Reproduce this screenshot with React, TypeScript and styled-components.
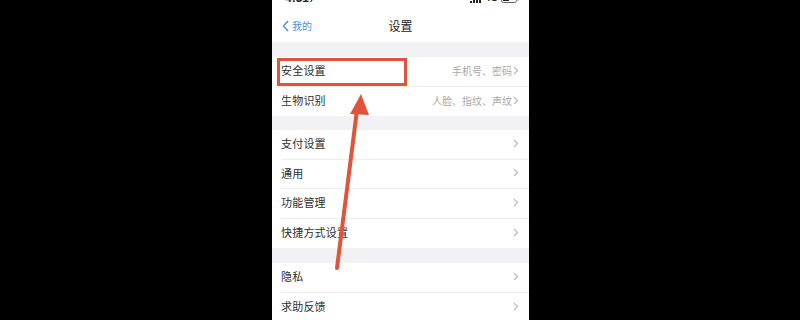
import React from "react";
import styled, { createGlobalStyle } from "styled-components";

const Global = createGlobalStyle`
  html, body { margin: 0; padding: 0; background: #000; }
  body { width: 800px; height: 320px; overflow: hidden; font-family: "Noto Sans CJK SC", "Noto Sans", sans-serif; }
`;

const Stage = styled.div`
  width: 800px;
  height: 320px;
  background: #000;
  display: flex;
  justify-content: flex-start;
  padding-left: 272px;
  box-sizing: border-box;
`;

const Phone = styled.div`
  position: relative;
  width: 257px;
  height: 320px;
  background: #fff;
  overflow: hidden;
  display: flex;
  flex-direction: column;
`;

const StatusBar = styled.div`
  height: 12px;
  flex: none;
  display: flex;
  align-items: flex-end;
  justify-content: space-between;
  padding: 0 10px 0 13px;
  overflow: hidden;
`;

const StatusTime = styled.span`
  font-family: "Liberation Sans", sans-serif;
  font-weight: 700;
  font-size: 12px;
  line-height: 12px;
  color: #222;
  margin-bottom: 8px;
`;

const StatusRight = styled.div`
  display: flex;
  align-items: flex-end;
  gap: 3px;
  margin-bottom: 9px;
  color: #222;
  font-family: "Liberation Sans", sans-serif;
  font-weight: 700;
  font-size: 10px;
  line-height: 10px;
`;

const NavBar = styled.div`
  height: 30px;
  box-sizing: border-box;
  padding: 0 10px 3px;
  flex: none;
  display: grid;
  grid-template-columns: 1fr auto 1fr;
  align-items: center;
`;

const Back = styled.div`
  display: flex;
  align-items: center;
  gap: 2px;
  color: #4a90d6;
  font-size: 10px;
`;

const Title = styled.div`
  font-size: 12px;
  color: #222;
`;

const Gap = styled.div<{ $h: number }>`
  height: ${(p) => p.$h}px;
  flex: none;
  background: #f2f2f4;
`;

const Group = styled.div`
  flex: none;
  display: flex;
  flex-direction: column;
  padding-left: 9px;
`;

const Row = styled.div`
  height: 29.5px;
  box-sizing: border-box;
  display: flex;
  align-items: center;
  justify-content: space-between;
  padding: 0 10px 2px 0;
  border-bottom: 1px solid #ededed;
  &:last-child { border-bottom: none; }
`;

const Label = styled.span`
  font-size: 11px;
  color: #2f2f2f;
  letter-spacing: 0.2px;
`;

const Detail = styled.span`
  display: flex;
  align-items: center;
  font-size: 10px;
  color: #a8a8a8;
`;

const Chevron = () => (
  <svg width="6" height="9" viewBox="0 0 6 9" style={{ marginLeft: 1 }}>
    <path d="M1 1 L4.5 4.5 L1 8" fill="none" stroke="#b8b8b8" strokeWidth="1.1" />
  </svg>
);

const Highlight = styled.div`
  position: absolute;
  left: 5px;
  top: 58px;
  width: 130px;
  height: 28px;
  box-sizing: border-box;
  border: 3px solid #e1533a;
`;

const ArrowSvg = styled.svg`
  position: absolute;
  left: 0;
  top: 0;
  pointer-events: none;
`;

const groups = [
  [
    { label: "安全设置", detail: "手机号、密码" },
    { label: "生物识别", detail: "人脸、指纹、声纹" },
  ],
  [
    { label: "支付设置" },
    { label: "通用" },
    { label: "功能管理" },
    { label: "快捷方式设置" },
  ],
  [{ label: "隐私" }, { label: "求助反馈" }],
];

const gaps = [15, 14, 15];

export default function App() {
  return (
    <>
      <Global />
      <Stage>
        <Phone>
          <StatusBar>
            <StatusTime>4:31 ⁄</StatusTime>
            <StatusRight>
              <svg width="12" height="8" viewBox="0 0 12 8">
                <rect x="0" y="6" width="2" height="2" fill="#222" />
                <rect x="3" y="4" width="2" height="4" fill="#222" />
                <rect x="6" y="2" width="2" height="6" fill="#222" />
                <rect x="9" y="0" width="2" height="8" fill="#222" />
              </svg>
              <span>4G</span>
              <svg width="18" height="8" viewBox="0 0 18 8">
                <rect x="0.5" y="0.5" width="15" height="7" rx="2" fill="none" stroke="#666" />
                <rect x="2" y="2" width="6" height="4" fill="#222" />
                <rect x="16" y="2.5" width="1.5" height="3" fill="#666" />
              </svg>
            </StatusRight>
          </StatusBar>
          <NavBar>
            <Back>
              <svg width="8" height="12" viewBox="0 0 8 12">
                <path d="M6 1 L1.5 6 L6 11" fill="none" stroke="#4a90d6" strokeWidth="1.4" />
              </svg>
              <span>我的</span>
            </Back>
            <Title>设置</Title>
            <div />
          </NavBar>
          {groups.map((g, gi) => (
            <React.Fragment key={gi}>
              <Gap $h={gaps[gi]} />
              <Group>
                {g.map((r) => (
                  <Row key={r.label}>
                    <Label>{r.label}</Label>
                    <Detail>
                      {"detail" in r ? r.detail : null}
                      <Chevron />
                    </Detail>
                  </Row>
                ))}
              </Group>
            </React.Fragment>
          ))}
          <Highlight />
          <ArrowSvg width="257" height="320" viewBox="0 0 257 320">
            <line x1="65" y1="268" x2="85" y2="110" stroke="#e1533a" strokeWidth="4" strokeLinecap="round" />
            <polygon points="89,94 78,114 97,115" fill="#e1533a" />
          </ArrowSvg>
        </Phone>
      </Stage>
    </>
  );
}
